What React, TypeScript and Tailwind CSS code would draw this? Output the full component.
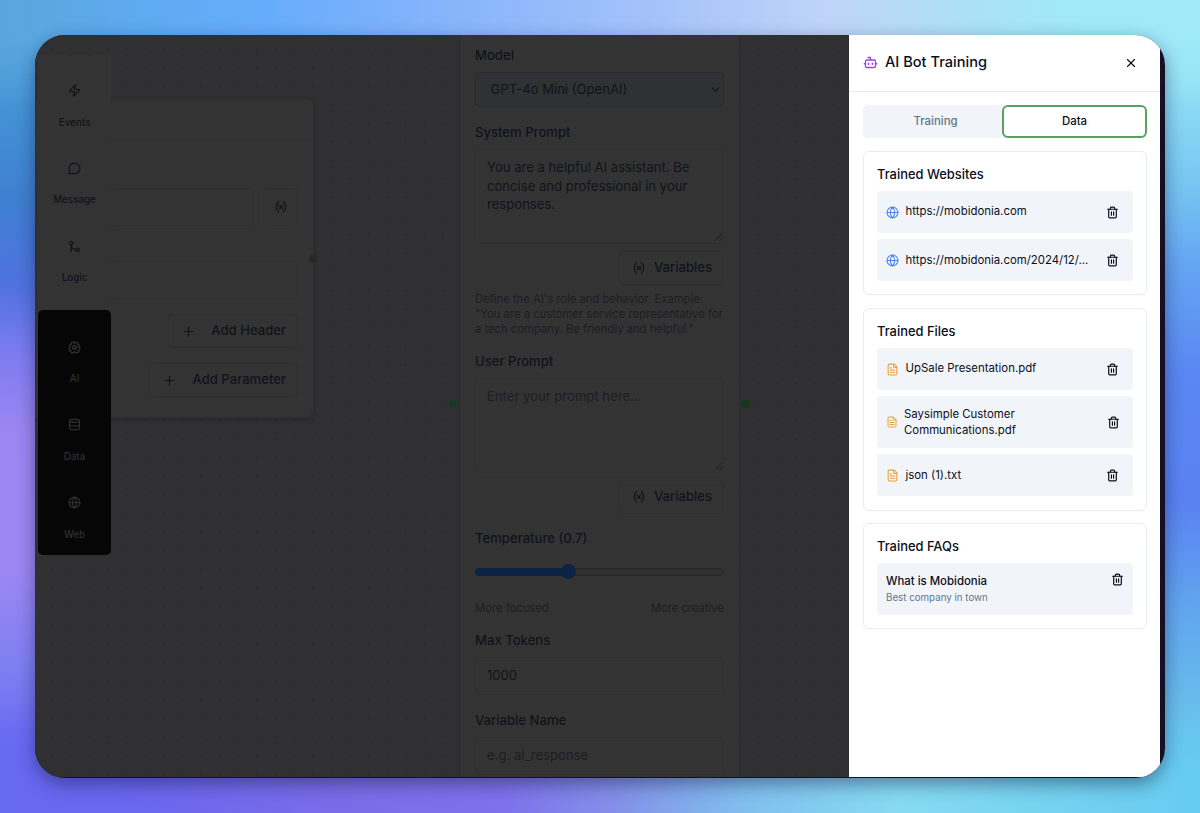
import {
  Bot,
  BrainCog,
  ChevronDown,
  Database,
  FileText,
  GitMerge,
  Globe,
  MessageCircle,
  Plus,
  Trash2,
  Variable,
  X,
  Zap,
} from "lucide-react";

const blockTools = [
  { label: "Events", icon: Zap },
  { label: "Message", icon: MessageCircle },
  { label: "Logic", icon: GitMerge },
];

const serviceTools = [
  { label: "AI", icon: BrainCog },
  { label: "Data", icon: Database },
  { label: "Web", icon: Globe },
];

const websites = ["https://mobidonia.com", "https://mobidonia.com/2024/12/..."];

function ToolItem({ label, icon: Icon }: { label: string; icon: typeof Zap }) {
  return (
    <div className="flex h-[77.8px] flex-col items-center">
      <Icon className="mt-[29px] size-[13px]" strokeWidth={2.2} />
      <span className="mt-[17.5px] text-[9.8px] leading-[16px] font-medium">{label}</span>
    </div>
  );
}

function ResizeGrip() {
  return (
    <svg className="absolute right-0 bottom-0.5 size-2 stroke-[#161616]" viewBox="0 0 8 8" fill="none" strokeWidth="0.8">
      <path d="M0.5 7.5 7.5 0.5M4.5 7.5 7.5 4.5" />
    </svg>
  );
}

function VariablesButton() {
  return (
    <div className="ml-auto flex h-[34px] w-[105px] items-center rounded-[5px] border border-[#2f2f30] pl-[12px] text-[13.1px] font-medium">
      <Variable className="mr-[8px] size-[14px]" strokeWidth={2} />
      Variables
    </div>
  );
}

function RequestNode() {
  return (
    <div className="absolute top-[63px] left-0 h-[320px] w-[279px] rounded-r-lg border border-[#2f2f30] bg-[#333333] shadow-[0_2px_5px_rgba(0,0,0,0.18)]">
      <div className="h-[41px] border-b border-[#303030]" />
      <div className="mt-[48px] flex gap-[9px] pr-[15px]">
        <div className="h-[38px] flex-1 rounded-[5px] border border-[#2f2f30]" />
        <div className="grid h-[38px] w-[35px] place-items-center rounded-[5px] border border-[#2f2f30]">
          <Variable className="size-[14px]" strokeWidth={2} />
        </div>
      </div>
      <div className="mt-[35px] mr-[15px] h-[38px] rounded-[5px] border border-[#2f2f30]" />
      <div className="mt-[15px] mr-[15px] flex flex-col items-end gap-[15px] text-[13.1px] font-medium">
        <div className="flex h-[34px] w-[130px] items-center justify-between rounded-[5px] border border-[#2f2f30] pr-[11px] pl-[12px]">
          <Plus className="size-[15px]" strokeWidth={1.8} />
          Add Header
        </div>
        <div className="flex h-[34px] w-[149px] items-center justify-between rounded-[5px] border border-[#2f2f30] pr-[11px] pl-[12px]">
          <Plus className="size-[15px]" strokeWidth={1.8} />
          Add Parameter
        </div>
      </div>
      <span className="absolute top-[156px] -right-[4px] size-[8px] rounded-full bg-[#272727]" />
    </div>
  );
}

function AiNode() {
  return (
    <div className="absolute top-0 left-[424px] h-[742px] w-[281px] border-x border-[#2b2b2d] bg-[#333333] px-[15px] text-[13.1px]">
      <div className="mt-[11px] leading-[18px] font-medium">Model</div>
      <div className="mt-[8px] flex h-[35px] items-center justify-between rounded-[5px] border border-[#2a2b2e] bg-[#303133] pr-px pl-[14.5px]">
        GPT-4o Mini (OpenAI)
        <ChevronDown className="size-[13px]" strokeWidth={2.2} />
      </div>
      <div className="mt-[16px] leading-[18px] font-medium">System Prompt</div>
      <div className="relative mt-[8px] h-[95px] rounded-[5px] border border-[#2f2f30] px-[11px] pt-[8px] leading-[18.7px]">
        You are a helpful AI assistant. Be concise and professional in your responses.
        <ResizeGrip />
      </div>
      <div className="mt-[7px]">
        <VariablesButton />
      </div>
      <p className="mt-[7px] text-[11.25px] leading-[15px] whitespace-nowrap text-[#1c1e24]">
        Define the AI's role and behavior. Example:
        <br />
        "You are a customer service representative for
        <br />a tech company. Be friendly and helpful."
      </p>
      <div className="mt-[15px] leading-[18px] font-medium">User Prompt</div>
      <div className="relative mt-[8px] h-[95px] rounded-[5px] border border-[#2f2f30] px-[11px] pt-[8px] leading-[18.7px] text-[#1c1e24]">
        Enter your prompt here...
        <ResizeGrip />
      </div>
      <div className="mt-[7px]">
        <VariablesButton />
      </div>
      <div className="mt-[15px] leading-[18px] font-medium">Temperature (0.7)</div>
      <div className="mt-[17px] flex h-[15px] items-center">
        <div className="h-[8px] w-[88px] rounded-l-full bg-[#0c2345]" />
        <div className="z-10 -mr-[8px] -ml-[2px] size-[15px] rounded-full bg-[#0c2345]" />
        <div className="h-[8px] flex-1 rounded-r-full border border-[#272727] bg-[#303030]" />
      </div>
      <div className="mt-[19.5px] flex justify-between text-[11.25px] leading-[18px] text-[#1c1e24]">
        <span>More focused</span>
        <span>More creative</span>
      </div>
      <div className="mt-[14.5px] leading-[18px] font-medium">Max Tokens</div>
      <div className="mt-[8px] flex h-[38px] items-center rounded-[5px] border border-[#2f2f30] pl-[11px]">1000</div>
      <div className="mt-[16px] leading-[18px] font-medium">Variable Name</div>
      <div className="mt-[8px] flex h-[38px] items-center rounded-[5px] border border-[#2f2f30] pl-[11px] text-[#1c1e24]">
        e.g. ai_response
      </div>
      <span className="absolute top-[365px] -left-[11px] size-[8px] rounded-full bg-[#133a24]" />
      <span className="absolute top-[365px] -right-[11px] size-[8px] rounded-full bg-[#133a18]" />
    </div>
  );
}

function FileRow({ name }: { name: string }) {
  return (
    <div className="flex h-[42px] items-center rounded-[4px] bg-[#f1f5f9] pr-[14px] pl-[9px]">
      <FileText className="mr-[6.5px] size-[13px] shrink-0 text-[#e9a13b]" />
      <span className="flex-1">{name}</span>
      <Trash2 className="size-[13px]" strokeWidth={2.2} />
    </div>
  );
}

function TrainingPanel() {
  return (
    <aside className="flex w-[311px] flex-col bg-white text-[11.4px] text-[#0b0f1c]">
      <header className="flex h-[57px] items-center border-b border-[#e5eaf0] pr-[22px] pb-px pl-[14px]">
        <Bot className="mr-[7px] size-[15px] text-[#9746e8]" strokeWidth={2.1} />
        <h2 className="flex-1 text-[14.6px] font-medium">AI Bot Training</h2>
        <X className="size-[14px]" />
      </header>

      <div className="flex flex-col pt-[13px] pr-[13px] pl-[14px]">
        <div className="flex h-[33px] rounded-[5px] bg-[#f1f5f9] font-medium">
          <div className="grid w-[139px] place-items-center pl-[6px] text-[#64748b]">Training</div>
          <div className="grid flex-1 place-items-center rounded-[6px] border-2 border-[#57a063] bg-white">Data</div>
        </div>

        <section className="mt-[13px] h-[144px] rounded-[6px] border border-[#e7ecf2] px-[13px] pt-[13px]">
          <h3 className="text-[12.9px] leading-[19px] font-medium">Trained Websites</h3>
          <div className="mt-[7px] space-y-[6.4px]">
            {websites.map((url) => (
              <div key={url} className="flex h-[42px] items-center rounded-[4px] bg-[#f1f5f9] pr-[14px] pl-[9px]">
                <Globe className="mr-[6.5px] size-[13px] text-[#4a86ee]" />
                <span className="flex-1">{url}</span>
                <Trash2 className="size-[13px]" strokeWidth={2.2} />
              </div>
            ))}
          </div>
        </section>

        <section className="mt-[13px] h-[203px] rounded-[6px] border border-[#e7ecf2] px-[13px] pt-[13px]">
          <h3 className="text-[12.9px] leading-[19px] font-medium">Trained Files</h3>
          <div className="mt-[7px] space-y-[6.4px]">
            <FileRow name="UpSale Presentation.pdf" />
            <div className="flex h-[51.5px] items-center rounded-[4px] bg-[#f1f5f9] pr-[13px] pl-[9px]">
              <FileText className="mr-[6px] h-[12px] w-[12px] shrink-0 text-[#e9a13b]" />
              <span className="flex-1 leading-[16.3px]">
                Saysimple Customer
                <br />
                Communications.pdf
              </span>
              <Trash2 className="size-[13px]" strokeWidth={2.2} />
            </div>
            <FileRow name="json (1).txt" />
          </div>
        </section>

        <section className="mt-[12px] h-[106px] rounded-[6px] border border-[#e7ecf2] px-[13px] pt-[13px]">
          <h3 className="text-[12.9px] leading-[19px] font-medium">Trained FAQs</h3>
          <div className="mt-[7px] flex h-[52px] justify-between rounded-[4px] bg-[#f1f5f9] px-[9px] pt-[9px]">
            <div>
              <p className="leading-[18px] font-medium">What is Mobidonia</p>
              <p className="mt-px text-[9.75px] leading-[14px] text-[#64748b]">Best company in town</p>
            </div>
            <Trash2 className="mt-px size-[13px]" strokeWidth={2.2} />
          </div>
        </section>
      </div>
    </aside>
  );
}

export default function App() {
  return (
    <div className="relative h-[813px] w-[1200px] overflow-hidden bg-[#6c7cf0] p-[35px] font-['Inter',sans-serif]">
      {/* wallpaper glow along each edge */}
      <div className="absolute inset-y-0 left-0 w-20 bg-[linear-gradient(to_bottom,#58a6dc_0%,#4594d6_12%,#3f7fd0_25%,#4f72df_35%,#7b7bf0_43%,#9c86f2_53%,#9c87f2_70%,#8180f2_81%,#696cf1_92%,#6669f2_100%)]" />
      <div className="absolute inset-y-0 right-0 w-20 bg-[linear-gradient(to_bottom,#9fe9f8_0%,#93e0f5_10%,#78c8f3_22%,#64a4f2_33%,#5a87f2_46%,#5a82f2_62%,#62a6ee_75%,#68bfec_88%,#66cbf1_100%)]" />
      <div className="absolute inset-x-0 top-0 h-[110px] bg-[linear-gradient(to_right,#58a6dc_0%,#5fabf2_13%,#66acfc_22%,#80b2fb_34%,#a0c0fa_52%,#bfd4f8_69%,#aee0f5_80%,#9fe9f8_90%,#9fe9f8_100%)] [mask-image:linear-gradient(to_bottom,black_35px,transparent)]" />
      <div className="absolute inset-x-0 bottom-0 h-[110px] bg-[linear-gradient(to_right,#6669f2_0%,#6b67ef_12%,#7b6de8_30%,#7d72ec_42%,#838fe8_51%,#81bfee_62%,#86dbf2_75%,#75d2f0_88%,#66cbf1_100%)] [mask-image:linear-gradient(to_top,black_35px,transparent)]" />
      <div className="absolute top-[35px] left-[35px] h-[743px] w-[1130px] rounded-[30px] shadow-[0_6px_18px_rgba(15,20,60,0.45)]" />

      <main className="relative flex h-[743px] w-[1130px] overflow-hidden rounded-[30px] bg-[#170f24] pr-[5px] pb-[1.5px]">
        <div className="relative flex-1 overflow-hidden bg-[#303032] bg-[radial-gradient(circle,#29292b_0.8px,transparent_1.3px)] bg-[length:18.6px_18.6px] bg-[position:8px_4.5px] text-[#10131b]">
          <RequestNode />
          <AiNode />
          <nav className="absolute top-[20px] left-[3px] w-[73px]">
            <div className="h-[255px] bg-[#333333] shadow-[0_0_2px_rgba(0,0,0,0.06)]">
              {blockTools.map((tool) => (
                <ToolItem key={tool.label} {...tool} />
              ))}
            </div>
            <div className="h-[245px] rounded-[5px] bg-[#060607] pt-[1.5px] text-[#303030]">
              {serviceTools.map((tool) => (
                <ToolItem key={tool.label} {...tool} />
              ))}
            </div>
          </nav>
        </div>
        <TrainingPanel />
      </main>
    </div>
  );
}
